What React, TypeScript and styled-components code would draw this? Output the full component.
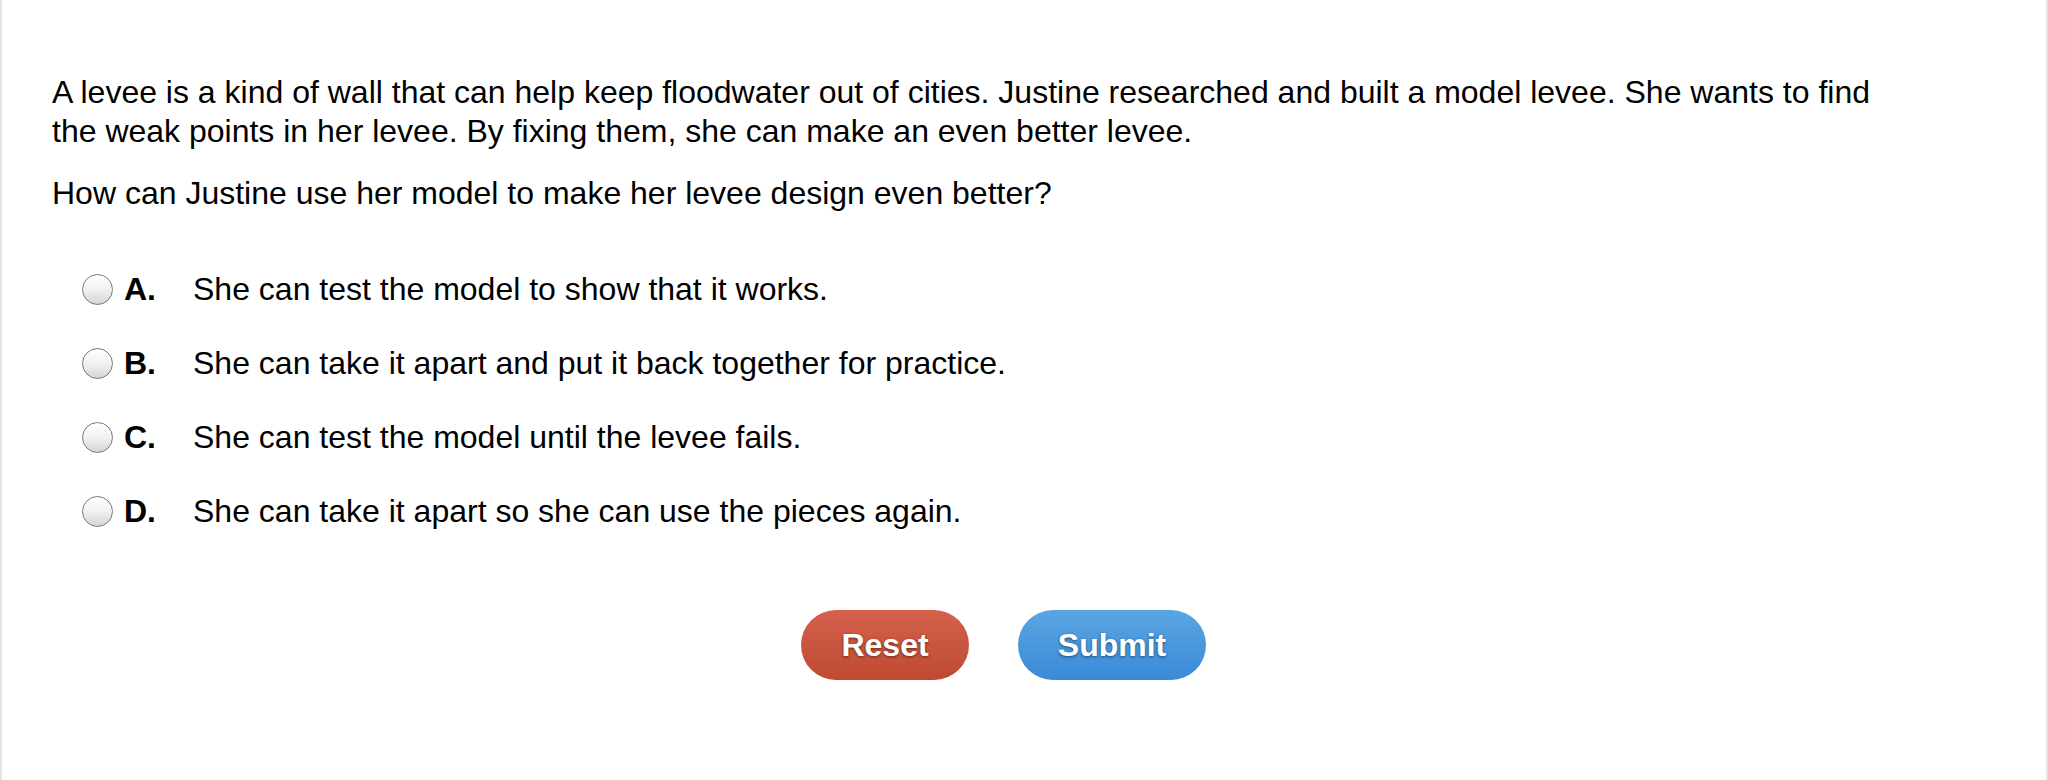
import React from "react";
import styled, { createGlobalStyle } from "styled-components";

const Global = createGlobalStyle`
  html, body { margin: 0; padding: 0; background: #ffffff; }
  body { font-family: "Liberation Sans", Arial, sans-serif; color: #000; }
`;

const Frame = styled.div`
  box-sizing: border-box;
  height: 780px;
  border-left: 2px solid #e4e4e4;
  border-right: 2px solid #e4e4e4;
  padding: 73px 91px 0 50px;
`;

const Content = styled.div`
  display: flex;
  flex-direction: column;
`;

const Paragraph = styled.p<{ $gap?: number }>`
  margin: 0 0 ${(p) => p.$gap ?? 0}px 0;
  max-width: 1840px;
  font-size: 32px;
  line-height: 39px;
`;

const Options = styled.div`
  display: flex;
  flex-direction: column;
  gap: 36px;
  margin: 57px 0 0 30px;
`;

const Option = styled.label`
  display: flex;
  align-items: center;
  height: 38px;
  font-size: 32px;
  cursor: pointer;
`;

const Radio = styled.span`
  box-sizing: border-box;
  width: 31px;
  height: 31px;
  border-radius: 50%;
  border: 1.5px solid #777777;
  background: linear-gradient(#ffffff 0%, #f3f3f3 45%, #d6d6d6 100%);
  box-shadow: inset 0 1px 1px rgba(255, 255, 255, 0.9);
  flex: none;
`;

const Letter = styled.span`
  width: 69px;
  margin-left: 11px;
  font-weight: bold;
`;

const Buttons = styled.div`
  display: flex;
  justify-content: center;
  gap: 49px;
  margin-top: 80px;
`;

const Pill = styled.button<{ $kind: "reset" | "submit" }>`
  height: 70px;
  width: ${(p) => (p.$kind === "reset" ? 168 : 188)}px;
  border: none;
  border-radius: 35px;
  font-family: "Liberation Sans", Arial, sans-serif;
  font-weight: bold;
  font-size: 32px;
  color: #ffffff;
  text-shadow: 0 1px 3px rgba(0, 0, 0, 0.5);
  background: ${(p) =>
    p.$kind === "reset"
      ? "linear-gradient(#d4614c, #bf4a34)"
      : "linear-gradient(#5aa5e2, #3a8ad9)"};
  cursor: pointer;
  padding: 0;
`;

const options = [
  { key: "A.", text: "She can test the model to show that it works." },
  { key: "B.", text: "She can take it apart and put it back together for practice." },
  { key: "C.", text: "She can test the model until the levee fails." },
  { key: "D.", text: "She can take it apart so she can use the pieces again." },
];

export default function App() {
  return (
    <>
      <Global />
      <Frame>
        <Content>
          <Paragraph $gap={23}>
            A levee is a kind of wall that can help keep floodwater out of cities. Justine researched and built a model levee. She wants to find the weak points in her levee. By fixing them, she can make an even better levee.
          </Paragraph>
          <Paragraph>How can Justine use her model to make her levee design even better?</Paragraph>
          <Options>
            {options.map((o) => (
              <Option key={o.key}>
                <Radio />
                <Letter>{o.key}</Letter>
                <span>{o.text}</span>
              </Option>
            ))}
          </Options>
          <Buttons>
            <Pill $kind="reset">Reset</Pill>
            <Pill $kind="submit">Submit</Pill>
          </Buttons>
        </Content>
      </Frame>
    </>
  );
}
